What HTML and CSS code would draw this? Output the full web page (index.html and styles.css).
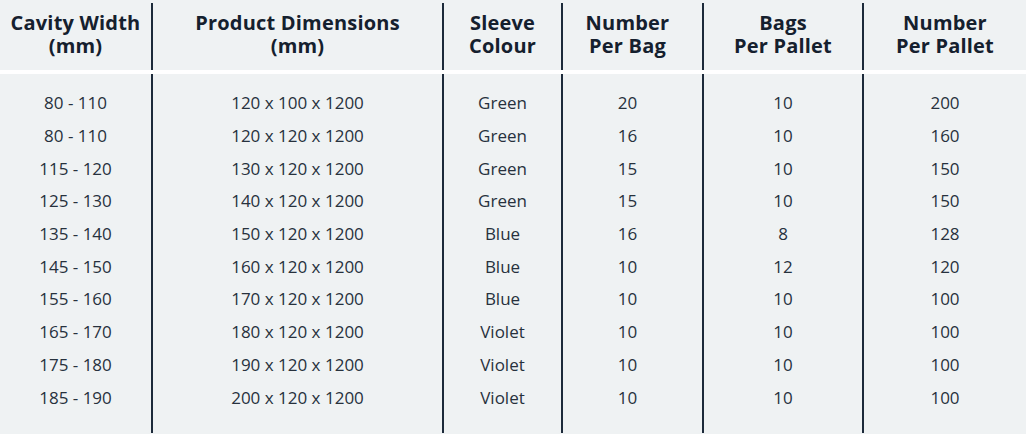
FILE: index.html
```html
<!DOCTYPE html>
<html lang="en">
<head>
<meta charset="utf-8">
<title>Cavity Sleeve Sizes</title>
<link rel="stylesheet" href="styles.css">
</head>
<body>
<div class="wrap">
<table class="spec">
  <colgroup>
    <col class="c1"><col class="c2"><col class="c3"><col class="c4"><col class="c5"><col class="c6">
  </colgroup>
  <thead>
    <tr>
      <th><span class="ln">Cavity Width</span><span class="ln">(mm)</span></th>
      <th><span class="ln">Product Dimensions</span><span class="ln">(mm)</span></th>
      <th><span class="ln">Sleeve</span><span class="ln">Colour</span></th>
      <th class="shift"><span class="ln">Number</span><span class="ln">Per Bag</span></th>
      <th><span class="ln">Bags</span><span class="ln">Per Pallet</span></th>
      <th><span class="ln">Number</span><span class="ln">Per Pallet</span></th>
    </tr>
  </thead>
  <tbody>
    <tr class="first"><td>80 - 110</td><td>120 x 100 x 1200</td><td>Green</td><td class="shift">20</td><td>10</td><td>200</td></tr>
    <tr><td>80 - 110</td><td>120 x 120 x 1200</td><td>Green</td><td class="shift">16</td><td>10</td><td>160</td></tr>
    <tr><td>115 - 120</td><td>130 x 120 x 1200</td><td>Green</td><td class="shift">15</td><td>10</td><td>150</td></tr>
    <tr><td>125 - 130</td><td>140 x 120 x 1200</td><td>Green</td><td class="shift">15</td><td>10</td><td>150</td></tr>
    <tr><td>135 - 140</td><td>150 x 120 x 1200</td><td>Blue</td><td class="shift">16</td><td>8</td><td>128</td></tr>
    <tr><td>145 - 150</td><td>160 x 120 x 1200</td><td>Blue</td><td class="shift">10</td><td>12</td><td>120</td></tr>
    <tr><td>155 - 160</td><td>170 x 120 x 1200</td><td>Blue</td><td class="shift">10</td><td>10</td><td>100</td></tr>
    <tr><td>165 - 170</td><td>180 x 120 x 1200</td><td>Violet</td><td class="shift">10</td><td>10</td><td>100</td></tr>
    <tr><td>175 - 180</td><td>190 x 120 x 1200</td><td>Violet</td><td class="shift">10</td><td>10</td><td>100</td></tr>
    <tr class="last"><td>185 - 190</td><td>200 x 120 x 1200</td><td>Violet</td><td class="shift">10</td><td>10</td><td>100</td></tr>
  </tbody>
</table>
</div>
</body>
</html>
```
FILE: styles.css
```css
html, body {
  margin: 0;
  padding: 0;
  background: #ffffff;
}
.wrap {
  background: #eff2f3;
  padding-top: 3px;
  width: 1026px;
  height: 431px;
  overflow: hidden;
}
.spec {
  border-collapse: collapse;
  table-layout: fixed;
  width: 1026px;
  font-family: "Open Sans", "Liberation Sans", sans-serif;
  color: #27313d;
}
.c1 { width: 152px; }
.c2 { width: 291px; }
.c3 { width: 119px; }
.c4 { width: 141px; }
.c5 { width: 160px; }
.c6 { width: 163px; }
.spec th, .spec td {
  text-align: center;
  border-left: 2px solid #1c2a3a;
}
.spec th:first-child, .spec td:first-child {
  border-left: none;
}
.spec th {
  font-weight: 700;
  font-size: 20px;
  letter-spacing: 0.2px;
  color: #15202e;
  padding: 8px 0 13px;
  vertical-align: top;
  border-bottom: 4px solid #ffffff;
}
.spec th .ln {
  display: block;
  height: 23px;
  line-height: 23px;
  white-space: nowrap;
}
.spec td {
  font-size: 17px;
  line-height: 20px;
  padding: 6.35px 0;
  vertical-align: middle;
}
.spec .shift {
  padding-right: 10px;
}
.spec tr.first td {
  padding-top: 19.35px;
}
.spec tr.last td {
  padding-bottom: 25.35px;
}
```
